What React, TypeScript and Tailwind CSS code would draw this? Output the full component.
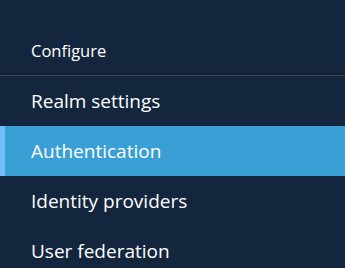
const ITEMS = ["Realm settings", "Authentication", "Identity providers", "User federation"];

export default function App() {
  const active = "Authentication";
  return (
    <div className="h-[268px] w-[345px] overflow-hidden bg-[#13263e] text-white" style={{ fontFamily: '"Open Sans", sans-serif' }}>
      <div className="flex h-[76px] items-end border-b border-[#3c4651] px-[31px] pb-[13px]">
        <span className="text-[16.5px] leading-[22px]">Configure</span>
      </div>
      <nav className="flex flex-col">
        {ITEMS.map(item => (
          <a key={item} className={"relative flex h-[50px] items-center px-[31px] text-[19px] " + (item === active ? "bg-[#3a9fd5]" : "")}>
            {item === active && <span className="absolute left-0 top-0 h-full w-[5px] bg-[#73bcf7]" />}
            {item}
          </a>
        ))}
      </nav>
    </div>
  );
}
